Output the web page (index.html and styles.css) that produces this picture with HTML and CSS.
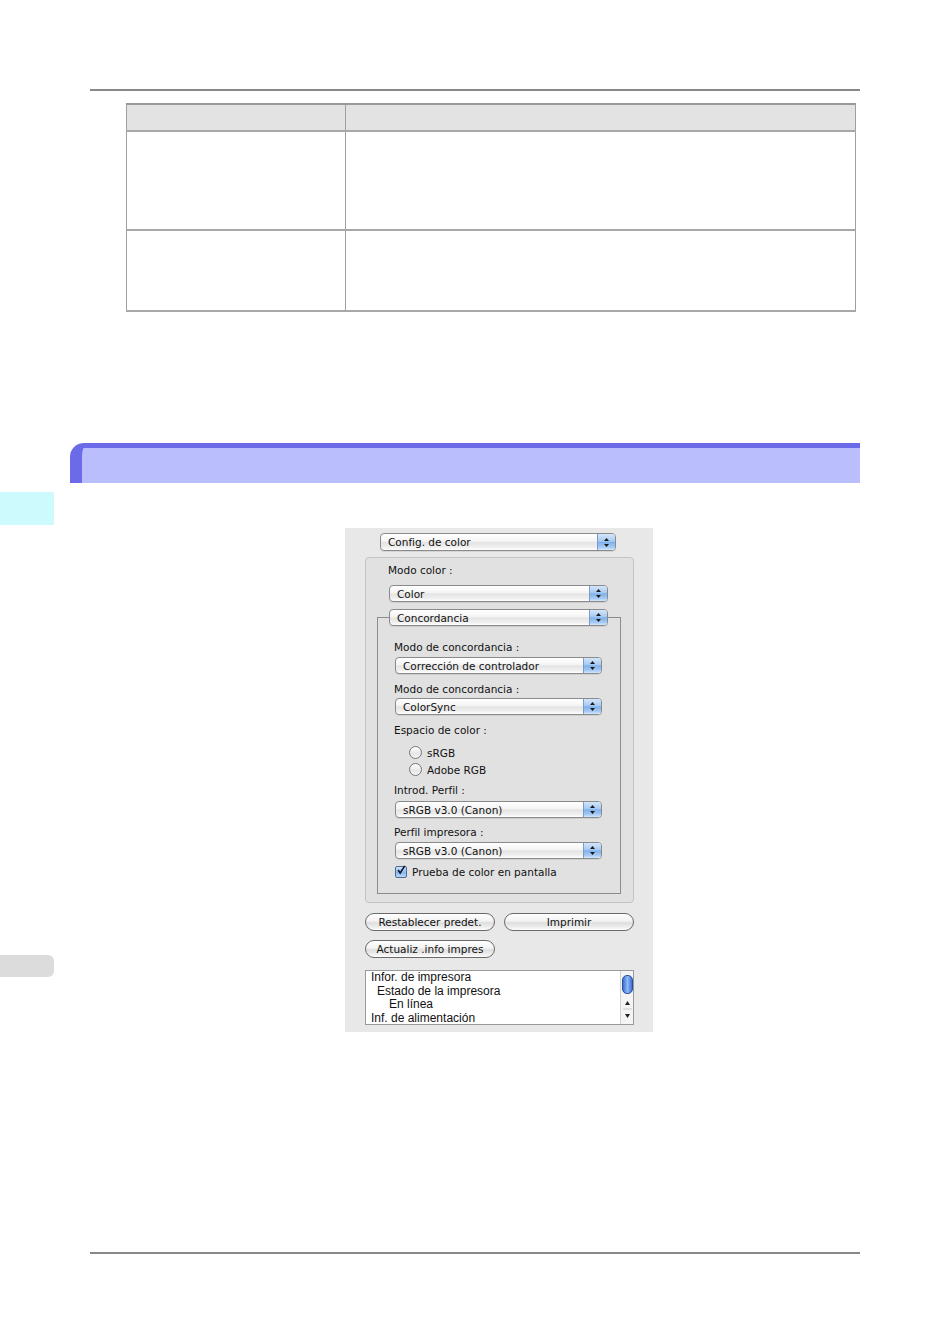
FILE: index.html
```html
<!DOCTYPE html>
<html lang="es">
<head>
    <meta charset="UTF-8">
    <meta name="viewport" content="width=device-width, initial-scale=1.0">
    <title>Config. de color</title>
    <link rel="stylesheet" href="styles.css">
</head>
<body>
    <div class="page">
        <div class="rule"></div>

        <table class="info-table">
            <tr class="head-row">
                <th class="col-a"></th>
                <th></th>
            </tr>
            <tr class="row-1">
                <td></td>
                <td></td>
            </tr>
            <tr class="row-2">
                <td></td>
                <td></td>
            </tr>
        </table>

        <div class="section-title"></div>

        <div class="body-row">
            <div class="side">
                <div class="tab-cyan"></div>
                <div class="tab-gray"></div>
            </div>

            <div class="dialog">
                <div class="popup popup-top">
                    <span class="popup-text">Config. de color</span>
                    <span class="popup-arrow"><svg width="7" height="11" viewBox="0 0 7 11"><path d="M3.5 1 L6 4 L1 4 Z M3.5 10 L6 7 L1 7 Z" fill="#1a1a1a"/></svg></span>
                </div>

                <div class="group">
                    <div class="label label-first">Modo color :</div>
                    <div class="popup popup-group">
                        <span class="popup-text">Color</span>
                        <span class="popup-arrow"><svg width="7" height="11" viewBox="0 0 7 11"><path d="M3.5 1 L6 4 L1 4 Z M3.5 10 L6 7 L1 7 Z" fill="#1a1a1a"/></svg></span>
                    </div>

                    <div class="tab-box">
                        <div class="popup popup-legend">
                            <span class="popup-text">Concordancia</span>
                            <span class="popup-arrow"><svg width="7" height="11" viewBox="0 0 7 11"><path d="M3.5 1 L6 4 L1 4 Z M3.5 10 L6 7 L1 7 Z" fill="#1a1a1a"/></svg></span>
                        </div>

                        <div class="label label-a">Modo de concordancia :</div>
                        <div class="popup popup-inner">
                            <span class="popup-text">Corrección de controlador</span>
                            <span class="popup-arrow"><svg width="7" height="11" viewBox="0 0 7 11"><path d="M3.5 1 L6 4 L1 4 Z M3.5 10 L6 7 L1 7 Z" fill="#1a1a1a"/></svg></span>
                        </div>

                        <div class="label label-b">Modo de concordancia :</div>
                        <div class="popup popup-inner popup-b">
                            <span class="popup-text">ColorSync</span>
                            <span class="popup-arrow"><svg width="7" height="11" viewBox="0 0 7 11"><path d="M3.5 1 L6 4 L1 4 Z M3.5 10 L6 7 L1 7 Z" fill="#1a1a1a"/></svg></span>
                        </div>

                        <div class="label label-b">Espacio de color :</div>
                        <div class="radio-row radio-first">
                            <span class="radio"></span>
                            <span>sRGB</span>
                        </div>
                        <div class="radio-row radio-second">
                            <span class="radio"></span>
                            <span>Adobe RGB</span>
                        </div>

                        <div class="label label-c">Introd. Perfil :</div>
                        <div class="popup popup-inner popup-c">
                            <span class="popup-text">sRGB v3.0 (Canon)</span>
                            <span class="popup-arrow"><svg width="7" height="11" viewBox="0 0 7 11"><path d="M3.5 1 L6 4 L1 4 Z M3.5 10 L6 7 L1 7 Z" fill="#1a1a1a"/></svg></span>
                        </div>

                        <div class="label label-c">Perfil impresora :</div>
                        <div class="popup popup-inner popup-d">
                            <span class="popup-text">sRGB v3.0 (Canon)</span>
                            <span class="popup-arrow"><svg width="7" height="11" viewBox="0 0 7 11"><path d="M3.5 1 L6 4 L1 4 Z M3.5 10 L6 7 L1 7 Z" fill="#1a1a1a"/></svg></span>
                        </div>

                        <div class="check-row">
                            <span class="checkbox"><svg width="12" height="12" viewBox="0 0 12 12"><path d="M2.5 6 L5 9.5 L10.5 1" fill="none" stroke="#101830" stroke-width="2"/></svg></span>
                            <span>Prueba de color en pantalla</span>
                        </div>
                    </div>
                </div>

                <div class="button-row">
                    <button class="pill">Restablecer predet.</button>
                    <button class="pill">Imprimir</button>
                </div>
                <div class="button-row button-row-2">
                    <button class="pill">Actualiz .info impres</button>
                </div>

                <div class="list-box">
                    <div class="list-lines">
                        <p class="lvl-0">Infor. de impresora</p>
                        <p class="lvl-1">Estado de la impresora</p>
                        <p class="lvl-2">En línea</p>
                        <p class="lvl-0">Inf. de alimentación</p>
                    </div>
                    <div class="scroll">
                        <div class="thumb"></div>
                        <div class="scroll-arrows">
                            <svg width="11" height="26" viewBox="0 0 11 26"><path d="M5.5 5 L8 9 L3 9 Z" fill="#222"/><line x1="1" y1="13" x2="10" y2="13" stroke="#ccc"/><path d="M5.5 22 L8 18 L3 18 Z" fill="#222"/></svg>
                        </div>
                    </div>
                </div>
            </div>
        </div>

        <div class="rule rule-bottom"></div>
    </div>
</body>
</html>
```

FILE: styles.css
```css
body {
    margin: 0;
    background-color: #fff;
    font-family: "DejaVu Sans", sans-serif;
}
.page {
    width: 950px;
    padding-top: 89px;
}
.rule {
    margin-left: 90px;
    width: 770px;
    height: 2px;
    background-color: #888;
}
.rule-bottom {
    margin-top: 220px;
}

/* empty table */
.info-table {
    margin-top: 12px;
    margin-left: 126px;
    width: 730px;
    border-collapse: collapse;
}
.info-table th,
.info-table td {
    padding: 0;
    border-left: 1px solid #a0a0a0;
    border-right: 1px solid #a0a0a0;
    border-bottom: 2px solid #a8a8a8;
}
.info-table th {
    background-color: #e3e3e3;
    border-top: 2px solid #999;
}
.col-a {
    width: 218px;
}
.head-row {
    height: 27px;
}
.row-1 {
    height: 99px;
}
.row-2 {
    height: 81px;
}

.section-title {
    margin-top: 131px;
    margin-left: 70px;
    width: 790px;
    height: 40px;
    box-sizing: border-box;
    background-color: #bbbefc;
    border-top: 5px solid #6b6be9;
    border-left: 12px solid #6b6be9;
    border-top-left-radius: 14px;
}

.body-row {
    display: flex;
    margin-top: 9px;
}
.side {
    width: 54px;
}
.tab-cyan {
    height: 33px;
    background-color: #cdfbfd;
}
.tab-gray {
    margin-top: 430px;
    height: 22px;
    background-color: #dcdcdc;
    border-radius: 0 6px 6px 0;
}

/* mac dialog */
.dialog {
    margin-left: 291px;
    margin-top: 36px;
    width: 308px;
    height: 504px;
    box-sizing: border-box;
    padding-top: 5px;
    background-color: #e8e8e8;
    font-size: 10.5px;
    color: #111;
}
.popup {
    display: flex;
    align-items: center;
    height: 18px;
    box-sizing: border-box;
    border: 1px solid #8a8a8a;
    border-radius: 4px;
    background: linear-gradient(#ffffff, #f4f4f4 45%, #e4e4e4 52%, #eeeeee 80%, #ffffff);
    overflow: hidden;
    box-shadow: 0 1px 0 rgba(0,0,0,0.08);
}
.popup-text {
    flex: 1;
    padding-left: 7px;
    white-space: nowrap;
}
.popup-arrow {
    width: 17px;
    height: 100%;
    display: flex;
    align-items: center;
    justify-content: center;
    border-left: 1px solid #7c9cc8;
    background: linear-gradient(#d4e6fb, #a6c9f2 45%, #7fb0ec 52%, #a9cdf5 85%, #d7e9fd);
}
.popup-top {
    margin-left: 35px;
    width: 236px;
}
.group {
    margin-top: 6px;
    margin-left: 20px;
    width: 269px;
    height: 346px;
    box-sizing: border-box;
    padding-top: 5px;
    background-color: #e1e1e1;
    border: 1px solid #c3c3c3;
    border-radius: 4px;
}
.label {
    line-height: 14px;
    height: 14px;
    white-space: nowrap;
}
.label-first {
    margin-left: 22px;
}
.popup-group {
    margin-top: 8px;
    margin-left: 23px;
    width: 219px;
    height: 17px;
}
.tab-box {
    margin-top: 15px;
    margin-left: 11px;
    width: 244px;
    height: 277px;
    box-sizing: border-box;
    border: 1px solid #8c8c8c;
}
.popup-legend {
    margin-top: -9px;
    margin-left: 11px;
    width: 219px;
    height: 17px;
}
.tab-box .label {
    margin-left: 16px;
}
.label-a {
    margin-top: 14px;
}
.label-b {
    margin-top: 8px;
}
.label-c {
    margin-top: 7px;
}
.popup-inner {
    margin-top: 3px;
    margin-left: 17px;
    width: 207px;
    height: 17px;
}
.popup-b {
    margin-top: 2px;
}
.popup-c {
    margin-top: 4px;
}
.radio-row {
    display: flex;
    align-items: center;
    gap: 5px;
    height: 13px;
    margin-left: 31px;
}
.radio-first {
    margin-top: 9px;
}
.radio-second {
    margin-top: 4px;
}
.radio {
    width: 13px;
    height: 13px;
    box-sizing: border-box;
    border: 1px solid #777;
    border-radius: 50%;
    background: linear-gradient(#ffffff, #e6e6e6 60%, #f5f5f5);
}
.check-row {
    display: flex;
    align-items: center;
    gap: 5px;
    margin-top: 6px;
    margin-left: 17px;
    height: 13px;
}
.checkbox {
    width: 12px;
    height: 12px;
    box-sizing: border-box;
    border: 1px solid #4d6a96;
    border-radius: 2px;
    background: linear-gradient(#cfe3fb, #8bb9ee 55%, #b9d6f7);
    display: flex;
    align-items: center;
    justify-content: center;
}
.checkbox svg {
    margin-top: -3px;
}

.button-row {
    display: flex;
    gap: 9px;
    margin-top: 10px;
    margin-left: 20px;
}
.button-row-2 {
    margin-top: 9px;
}
.pill {
    width: 130px;
    height: 18px;
    padding: 0;
    border: 1px solid #6a6a6a;
    border-radius: 9px;
    background: linear-gradient(#ffffff, #f2f2f2 45%, #dedede 55%, #f0f0f0 85%, #ffffff);
    font-family: "DejaVu Sans", sans-serif;
    font-size: 10.5px;
    color: #111;
}

.list-box {
    display: flex;
    margin-top: 12px;
    margin-left: 20px;
    width: 269px;
    height: 55px;
    box-sizing: border-box;
    background-color: #fff;
    border: 1px solid #9a9a9a;
    overflow: hidden;
}
.list-lines {
    flex: 1;
    font-family: "Liberation Sans", Arial, sans-serif;
    font-size: 12px;
}
.list-lines p {
    margin: 0;
    line-height: 13.5px;
    white-space: nowrap;
}
.lvl-0 {
    padding-left: 5px;
}
.lvl-1 {
    padding-left: 11px;
}
.lvl-2 {
    padding-left: 23px;
}
.scroll {
    width: 12px;
    border-left: 1px solid #d0d0d0;
    background-color: #f4f4f4;
    display: flex;
    flex-direction: column;
    align-items: center;
}
.thumb {
    margin-top: 4px;
    width: 9px;
    height: 18px;
    border: 1px solid #2a4f9c;
    border-radius: 5px;
    background: linear-gradient(90deg, #3b6fd6, #8fbaf5 50%, #3b6fd6);
}
.scroll-arrows {
    margin-top: 2px;
}
```
